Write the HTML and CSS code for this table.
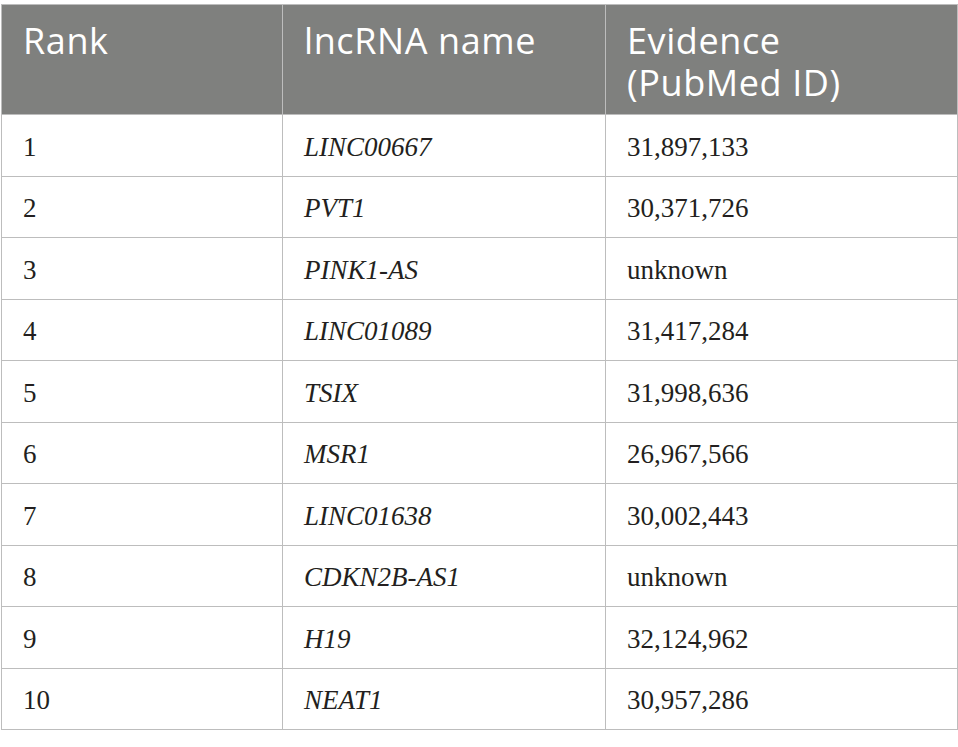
FILE: index.html
```html
<!DOCTYPE html>
<html>
<head>
<meta charset="utf-8">
<link rel="stylesheet" href="styles.css">
</head>
<body>
<div class="wrap">
<table class="tbl">
  <colgroup>
    <col class="c1"><col class="c2"><col class="c3">
  </colgroup>
  <thead>
    <tr><th>Rank</th><th>lncRNA name</th><th>Evidence<br>(PubMed ID)</th></tr>
  </thead>
  <tbody>
    <tr><td>1</td><td class="gene">LINC00667</td><td>31,897,133</td></tr>
    <tr><td>2</td><td class="gene">PVT1</td><td>30,371,726</td></tr>
    <tr><td>3</td><td class="gene">PINK1-AS</td><td>unknown</td></tr>
    <tr><td>4</td><td class="gene">LINC01089</td><td>31,417,284</td></tr>
    <tr><td>5</td><td class="gene">TSIX</td><td>31,998,636</td></tr>
    <tr><td>6</td><td class="gene">MSR1</td><td>26,967,566</td></tr>
    <tr><td>7</td><td class="gene">LINC01638</td><td>30,002,443</td></tr>
    <tr><td>8</td><td class="gene">CDKN2B-AS1</td><td>unknown</td></tr>
    <tr><td>9</td><td class="gene">H19</td><td>32,124,962</td></tr>
    <tr><td>10</td><td class="gene">NEAT1</td><td>30,957,286</td></tr>
  </tbody>
</table>
</div>
</body>
</html>
```
FILE: styles.css
```css
html, body {
  margin: 0;
  padding: 0;
  background: #ffffff;
}
.wrap {
  padding: 4px 0 0 1px;
}
.tbl {
  border-collapse: collapse;
  width: 956px;
  table-layout: fixed;
}
.c1 { width: 281px; }
.c2 { width: 323px; }
.c3 { width: 352px; }
.tbl th, .tbl td {
  border: 1.5px solid #bdbdbd;
  text-align: left;
  padding: 0 10px 0 21px;
}
.tbl th {
  background: #7f807e;
  color: #ffffff;
  font-family: "Open Sans", sans-serif;
  font-weight: 400;
  font-size: 36px;
  letter-spacing: 0.6px;
  line-height: 42px;
  vertical-align: top;
  height: 110px;
  box-sizing: border-box;
  padding-top: 15px;
}
.tbl td {
  font-family: "Liberation Serif", serif;
  font-size: 27px;
  color: #231f20;
  height: 61.5px;
  box-sizing: border-box;
  vertical-align: middle;
  padding-top: 4px;
}
.tbl td.gene {
  font-style: italic;
}
```
